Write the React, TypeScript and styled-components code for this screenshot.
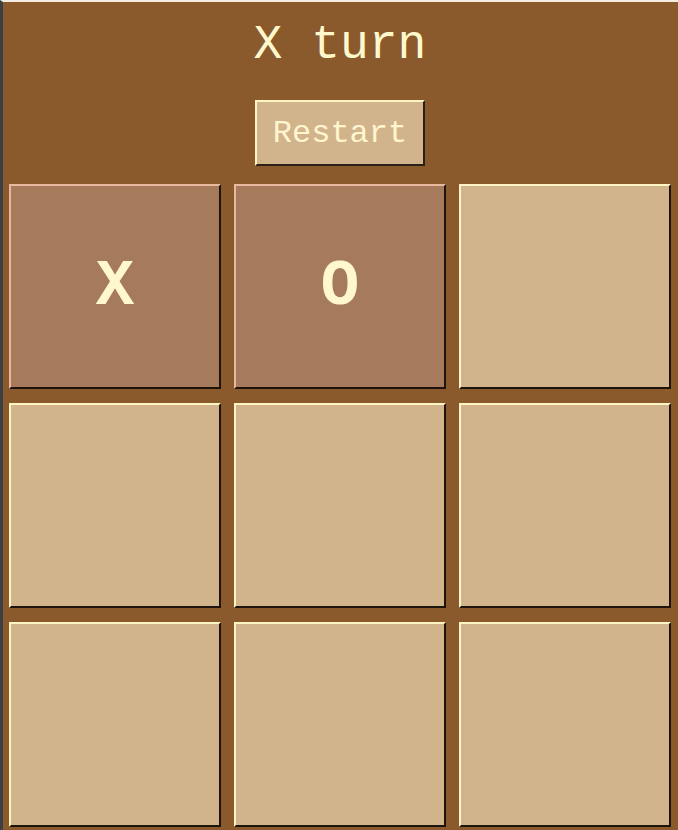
import React, { useState } from "react";
import styled, { createGlobalStyle } from "styled-components";

type Mark = "X" | "O" | null;

const GlobalStyle = createGlobalStyle`
  html, body {
    margin: 0;
    padding: 0;
    background: #3b4045;
  }
`;

const Page = styled.div`
  width: 678px;
  height: 830px;
  box-sizing: border-box;
  border-top: 2px solid #f4ede4;
  border-left: 3px solid #3b4045;
  background: #8a5a2c;
  overflow: hidden;
`;

const Board = styled.div`
  display: flex;
  flex-direction: column;
  align-items: center;
  padding: 0 7px 0 6px;
`;

const Title = styled.h1`
  margin: 19px 0 0;
  font-family: "Liberation Mono", "Courier New", monospace;
  font-weight: normal;
  font-size: 48px;
  line-height: 48px;
  color: #fff8cc;
`;

const RestartButton = styled.button`
  margin-top: 31px;
  width: 170px;
  height: 66px;
  box-sizing: border-box;
  background: #d2b48c;
  border: 2px solid;
  border-color: #fff4c4 #2a2018 #2a2018 #fff4c4;
  font-family: "Liberation Mono", "Courier New", monospace;
  font-size: 32px;
  color: #fff6cf;
  padding: 0;
  cursor: pointer;
`;

const Grid = styled.div`
  margin-top: 18px;
  display: grid;
  grid-template-columns: repeat(3, 212px);
  grid-auto-rows: 205px;
  column-gap: 13px;
  row-gap: 14px;
`;

const Cell = styled.button<{ $filled: boolean }>`
  box-sizing: border-box;
  padding: 0;
  border: 2px solid;
  border-color: ${(p) =>
    p.$filled ? "#e8b8a0 #1e140e #1e140e #e8b8a0" : "#fff4c4 #1e140e #1e140e #fff4c4"};
  background: ${(p) => (p.$filled ? "#a67b5b" : "#d2b48c")};
  display: flex;
  align-items: center;
  justify-content: center;
  font-family: "Liberation Mono", "Courier New", monospace;
  font-weight: bold;
  font-size: 64px;
  color: #fff8cc;
  cursor: pointer;
`;

const START: Mark[] = ["X", "O", null, null, null, null, null, null, null];

export default function App() {
  const [cells, setCells] = useState<Mark[]>(START);
  const [turn, setTurn] = useState<"X" | "O">("X");

  const play = (i: number) => {
    if (cells[i]) return;
    const next = [...cells];
    next[i] = turn;
    setCells(next);
    setTurn(turn === "X" ? "O" : "X");
  };

  const restart = () => {
    setCells(Array(9).fill(null));
    setTurn("X");
  };

  return (
    <>
      <GlobalStyle />
      <Page>
        <Board>
          <Title>{turn} turn</Title>
          <RestartButton onClick={restart}>Restart</RestartButton>
          <Grid>
            {cells.map((c, i) => (
              <Cell key={i} $filled={!!c} onClick={() => play(i)}>
                {c}
              </Cell>
            ))}
          </Grid>
        </Board>
      </Page>
    </>
  );
}
